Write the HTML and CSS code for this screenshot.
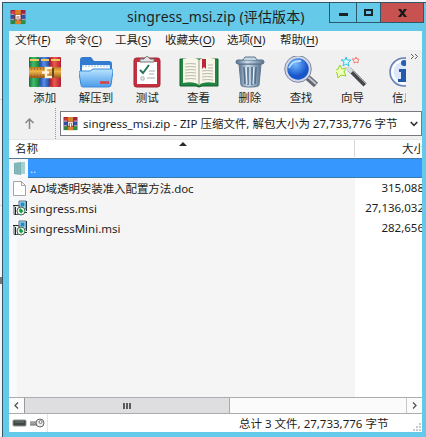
FILE: index.html
```html
<!DOCTYPE html>
<html lang="zh-CN">
<head>
<meta charset="utf-8">
<title>singress_msi.zip (评估版本)</title>
<link rel="stylesheet" href="styles.css">
</head>
<body>
<svg class="defs" width="0" height="0">
  <defs>
    <linearGradient id="gold" x1="0" y1="0" x2="0" y2="1"><stop offset="0" stop-color="#bd7520"/><stop offset=".4" stop-color="#efb64d"/><stop offset="1" stop-color="#9c5717"/></linearGradient>
    <linearGradient id="red"><stop offset="0" stop-color="#a51f24"/><stop offset=".4" stop-color="#ee5750"/><stop offset="1" stop-color="#ab2030"/></linearGradient>
    <linearGradient id="blue"><stop offset="0" stop-color="#2450a8"/><stop offset=".4" stop-color="#558ee9"/><stop offset="1" stop-color="#263f93"/></linearGradient>
    <linearGradient id="green"><stop offset="0" stop-color="#15723a"/><stop offset=".4" stop-color="#40bd69"/><stop offset="1" stop-color="#17753a"/></linearGradient>
    <linearGradient id="folder" x1="0" y1="0" x2="0" y2="1"><stop offset="0" stop-color="#b9e4ff"/><stop offset="1" stop-color="#4b9bea"/></linearGradient>
    <linearGradient id="bin"><stop offset="0" stop-color="#58718c"/><stop offset=".4" stop-color="#cddceb"/><stop offset="1" stop-color="#5b7690"/></linearGradient>
    <radialGradient id="lens" cx=".4" cy=".3"><stop offset="0" stop-color="#75b9ff"/><stop offset="1" stop-color="#1755cb"/></radialGradient>
    <symbol id="books" viewBox="0 0 32 32">
      <rect x="0" y="1" width="11" height="30" rx="1" fill="url(#green)"/><rect x="11" y="1" width="10" height="30" rx="1" fill="url(#blue)"/><rect x="21" y="1" width="11" height="30" rx="1" fill="url(#red)"/>
      <path d="M1 4h9M12 4h8M22 4h9" stroke="#f1ca60" stroke-width="2"/>
      <rect y="11" width="32" height="11" rx="1" fill="url(#gold)"/><path d="M2 13h14M2 20h14" stroke="#855019" stroke-dasharray="1 2"/>
      <path d="M23 12h-6v9h6M13 16.5h7" fill="none" stroke="#fff3dc" stroke-width="2.4"/><path d="M24 12v9" stroke="#6e4219" stroke-width="2"/>
    </symbol>
    <symbol id="rar" viewBox="0 0 16 16">
      <path fill="#9b2447" d="M0 0h16v5H0z"/><path fill="#304fa2" d="M0 5h16v5H0z"/><path fill="#328349" d="M0 10h16v5H0z"/>
      <path fill="#d13c35" d="M1 1h4v3H1z"/><path fill="#2e944d" d="M11 11h4v3h-4z"/>
      <path d="M5 0h6v15H5z" fill="#d9822a"/><path d="M4 5h8v6H4z" fill="#74332a"/><path d="M6 10V6h4v4M8 7v4" stroke="#fff" stroke-width="1.3" fill="none"/>
      <path d="M0 4.5h4M12 4.5h4M0 10h4M12 10h4" stroke="#e1a0a5"/>
    </symbol>
    <symbol id="msi" viewBox="0 0 15 16">
      <path d="M6 1h7v8H6z" fill="#b8dff1" stroke="#53778b"/><path d="M7.5 2.5h4v4h-4z" fill="#218bc4"/><path d="M13.5 1v10M11 12.5h3" stroke="#25363e"/>
      <path d="M1 5.5h5v9H1z" fill="#edf0ef" stroke="#535a5e"/><path d="M2.5 7v8M0 5.5h5" stroke="#222"/>
      <circle cx="8" cy="11" r="4" fill="#eef5ee" stroke="#49654f"/><path d="M7 8l3.5 3L8 13.5 6 11z" fill="#169b43"/>
    </symbol>
  </defs>
</svg>
<div class="desktop">
<main class="window">
  <header class="titlebar">
    <svg class="app-icon"><use href="#rar"/></svg>
    <h1>singress_msi.zip (评估版本)</h1>
    <div class="controls">
      <button class="ctl min" aria-label="最小化"><i></i></button>
      <button class="ctl max" aria-label="最大化"><i></i></button>
      <button class="ctl close" aria-label="关闭"><svg width="9" height="8" viewBox="0 0 9 8"><path d="M0 0h3l1.5 2.3L6 0h3L6 4l3 4H6L4.500 5.700 3 8H0l3-4z" fill="#15181c"/></svg></button>
    </div>
  </header>
  <div class="client">
    <nav class="menu"><span>文件(<u>F</u>)</span><span>命令(<u>C</u>)</span><span>工具(<u>S</u>)</span><span>收藏夹(<u>O</u>)</span><span>选项(<u>N</u>)</span><span>帮助(<u>H</u>)</span></nav>
    <div class="toolbar">
      <div class="tool"><svg viewBox="0 0 32 32"><use href="#books"/></svg><span>添加</span></div>
      <div class="tool"><svg class="wide" viewBox="0 0 34 32"><path d="M1 4q0-3 3-3h8l3 4h15q3 0 3 3v19H1z" fill="#327bd1"/><path d="M3 9h28v12H3z" fill="#f8fcff"/><path d="M3 10h28" stroke="#9abbe0" stroke-dasharray="2 1"/><path d="M1 15h10l3-2h19q1 0 1 2l-2 14q0 2-3 2H4q-2 0-2-2L0 17q0-2 1-2z" fill="url(#folder)" stroke="#3c8cdc"/><path d="M21 26.500h9" stroke="#d74042" stroke-width="2.500"/></svg><span>解压到</span></div>
      <div class="tool"><svg viewBox="0 0 32 32"><rect x="3" y="2" width="26" height="29" rx="2.500" fill="#c52f3e" stroke="#9e2533"/><path d="M6 6h20v22H6z" fill="#fff"/><path d="M9 6V3h4q3-5 6 0h4v3z" fill="#e1e3e6" stroke="#777"/><path d="M9 14l3 3 6-8" fill="none" stroke="#25765d" stroke-width="2"/><path d="M18 15h6M18 18h5M10 21h3v3h-3zM16 22h8" fill="none" stroke="#a7abb4"/></svg><span>测试</span></div>
      <div class="tool"><svg class="book" viewBox="0 0 40 32"><path d="M1 3h38v27H23l-3 1-3-1H1z" fill="#218542" stroke="#12612b"/><path d="M4 3q11-3 16 1 5-4 16-1v24q-11-2-16 2-5-4-16-2z" fill="#f8f5e9"/><path d="M20 4v25" stroke="#98968d"/><path d="M6 8q6-1 11 0M6 11q6-1 11 0M6 14q6-1 11 0M6 17q6-1 11 0M6 20q6-1 11 0M6 23q6-1 11 0M23 15q6-1 11 0M23 18q6-1 11 0M23 21q6-1 11 0M23 24q6-1 11 0M29 9h5M29 12h5" stroke="#bbb8ac" fill="none"/><path d="M23 3h4v10l-2-2-2 2z" fill="#bd2838"/></svg><span>查看</span></div>
      <div class="tool"><svg viewBox="0 0 32 32"><path d="M5 8h22l-2 21q0 2-9 2t-9-2z" fill="url(#bin)" stroke="#607890"/><path d="M10 11l1 17M14 11v18M18 11v18M22 11l-1 17" stroke="#52708e" stroke-width="1.600"/><path d="M12 11l1 17M20 11l-1 17" stroke="#edf5fb"/><rect x="2" y="4" width="28" height="4" rx="2" fill="url(#bin)" stroke="#546e88"/><path d="M9 4l2-3h10l2 3" fill="#c4d5e3" stroke="#60778f"/></svg><span>删除</span></div>
      <div class="tool"><svg class="wide" viewBox="0 0 34 32"><path d="M23 21l9 8" stroke="#60656f" stroke-width="6"/><path d="M23 20l9 8" stroke="#c0c5ce" stroke-width="2"/><circle cx="14" cy="13" r="12" fill="url(#lens)" stroke="#d3d8e6" stroke-width="2.500"/><circle cx="14" cy="13" r="13.300" fill="none" stroke="#7c87a4"/><path d="M5 12q3-8 12-7" fill="none" stroke="#b4dcff" stroke-width="2"/></svg><span>查找</span></div>
      <div class="tool"><svg viewBox="0 0 32 32"><path d="M13 13l16 16" stroke="#45474b" stroke-width="4.500"/><path d="M14 12l16 16" stroke="#a3a5aa"/><path d="M11 11l5 5" stroke="#d7dce1" stroke-width="4"/><path d="M10 1l1 3 4 0-3 3 1 3-3-2-3 2 1-4-3-2h4z" fill="#d5fcff" stroke="#38c5df"/><path d="M4 9l2 4 4-1-2 4 2 4-5-1-3 3-1-5-3-2 4-2z" fill="#edffba" stroke="#91d52b"/><path d="M20 1l1 2h2l-1 2 0 2-2-1-2 1v-2l-2-2h3z" fill="#fff0ec" stroke="#ee7d79"/></svg><span>向导</span></div>
      <div class="tool info"><svg viewBox="0 0 32 32"><circle cx="16" cy="16" r="14" fill="#dce7fb" stroke="#6680b5" stroke-width="1.500"/><circle cx="16" cy="16" r="11.500" fill="none" stroke="#fff" stroke-width="2"/><circle cx="16" cy="7" r="3" fill="#2560b8"/><path d="M11 13h8v10h3v3H10v-3h3v-7h-2z" fill="#2458ad"/></svg><span>信息</span></div>
      <div class="overflow"><svg width="9" height="7" viewBox="0 0 9 7"><path d="M1 1l2.500 2.500L1 6M5 1l2.500 2.500L5 6" fill="none" stroke="#5b5d63"/></svg></div>
    </div>
    <div class="location">
      <div class="up"><svg width="11" height="12" viewBox="0 0 11 12"><path d="M5.500 11V1M1.500 5l4-4 4 4" fill="none" stroke="#85878b" stroke-width="1.500"/></svg></div>
      <div class="address"><svg class="app-icon"><use href="#rar"/></svg><span>singress_msi.zip - ZIP 压缩文件, 解包大小为 27,733,776 字节</span><svg class="drop" width="8" height="6" viewBox="0 0 8 6"><path d="M.7 1L4 4.300 7.300 1" fill="none" stroke="#303236" stroke-width="1.600"/></svg></div>
    </div>
    <div class="columns"><span class="name-col">名称</span><i class="sort"></i><span class="size-col">大小</span></div>
    <div class="list">
      <div class="row selected"><div class="glyph"><svg width="13" height="15" viewBox="0 0 13 15"><path d="M1 2l7-1v13l-7-1z" fill="#78b1b3"/><path d="M8 1h4v12H8z" fill="#a5d0d0"/><path d="M3 3v9M6 2v11" stroke="#91c3c4"/></svg></div><span class="file">..</span></div>
      <div class="row"><div class="glyph"><svg width="13" height="15" viewBox="0 0 13 15"><path d="M.5.500h8l4 4v10H.5zM8.500.500v4h4" fill="#fff" stroke="#a5a5a5"/></svg></div><span class="file doc">AD域透明安装准入配置方法.doc</span><span class="size">315,088</span></div>
      <div class="row"><div class="glyph"><svg width="15" height="16"><use href="#msi"/></svg></div><span class="file">singress.msi</span><span class="size">27,136,032</span></div>
      <div class="row"><div class="glyph"><svg width="15" height="16"><use href="#msi"/></svg></div><span class="file">singressMini.msi</span><span class="size">282,656</span></div>
    </div>
    <div class="scroll"><div class="arrow"><svg width="5" height="7" viewBox="0 0 5 7"><path d="M4 .5L1 3.500 4 6.500" fill="none" stroke="#505257" stroke-width="1.300"/></svg></div><div class="thumb"><i></i><i></i><i></i></div><div class="arrow right"><svg width="5" height="7" viewBox="0 0 5 7"><path d="M1 .5l3 3-3 3" fill="none" stroke="#505257" stroke-width="1.300"/></svg></div></div>
    <footer class="status"><div class="lamps"><svg width="34" height="12" viewBox="0 0 34 12"><rect x="1" y="3" width="13" height="6" rx="1" fill="#3e4944" stroke="#929793"/><path d="M3 5h9" stroke="#707c75"/><path d="M18 5h8v2h-8M18 8h8" fill="#ddd" stroke="#62655f"/><circle cx="28" cy="6" r="4" fill="#eee" stroke="#666963"/><circle cx="28.500" cy="5" r="1.500" fill="#fff" stroke="#777"/></svg></div><div class="total"><span>总计 3 文件, 27,733,776 字节</span></div><svg class="grip" width="8" height="8" viewBox="0 0 8 8"><path d="M6 0h2v2H6zM3 3h2v2H3zM6 3h2v2H6zM0 6h2v2H0zM3 6h2v2H3zM6 6h2v2H6z" fill="#c7c9cd"/></svg></footer>
  </div>
</main>
</div>
</body>
</html>
```
FILE: styles.css
```css
* { box-sizing: border-box; }
body { margin: 0; width: 426px; height: 437px; overflow: hidden; background: #f7f8fa; color: #1d1e20; font: 12px/16px "Noto Sans", "Noto Sans CJK SC", sans-serif; }
.defs { position: absolute; width: 0; height: 0; }
svg { display: block; flex-shrink: 0; }
.desktop { height: 437px; padding: 2px 0 0 2px; background: linear-gradient(#d4d4d4, #d4d4d4) 0 99px / 2px 1px no-repeat, linear-gradient(#d4d4d4, #d4d4d4) 0 205px / 2px 1px no-repeat, linear-gradient(#777, #777) 0 277px / 2px 7px no-repeat, #f4f5f8; }
.window { height: 435px; border: solid #315665; border-width: 1px 0 0 1px; background: #65c9e9; padding: 0 4px 5px 6px; }
.titlebar { height: 28px; display: flex; align-items: center; }
.titlebar .app-icon { width: 16px; height: 15px; margin-left: 1px; }
.titlebar .app-icon, .address .app-icon { overflow: hidden; }
h1 { font-size: 14px; font-weight: 400; line-height: 20px; width: 182px; margin: 0 0 0 101px; white-space: nowrap; letter-spacing: .13px; }
.controls { display: flex; align-self: flex-start; margin-left: 21px; width: 95px; height: 20px; border: 1px solid #2b586b; border-top: 0; margin-right: -2px; }
.ctl { border: 0; border-right: 1px solid #2b586b; padding: 0; width: 27px; background: transparent; display: flex; align-items: center; justify-content: center; }
.min i { width: 9px; height: 3px; background: #16242a; margin-top: 3px; }
.max { width: 24px; }
.max i { width: 9px; height: 7px; border: 2px solid #16242a; }
.close { flex: 1; border: 0; background: #c85250; }
.client { height: 401px; background: #f0f0f1; overflow: hidden; }
.menu { height: 19px; background: #f7f7f8; display: flex; padding-left: 6px; white-space: nowrap; font-size: 11.5px; line-height: 18px; }
.menu span { width: 50px; letter-spacing: -.08px; }
.menu span:nth-child(4) { width: 62px; }
.menu span:nth-child(5) { width: 53px; }
.menu u { text-underline-offset: 2px; }
.toolbar { height: 58px; display: flex; padding-left: 10px; overflow: hidden; }
.tool { flex: 0 0 51.3px; width: 51.3px; display: flex; flex-direction: column; align-items: center; padding-top: 6px; }
.tool svg { width: 32px; height: 32px; }
.tool .wide { width: 34px; }
.tool .book { width: 40px; }
.tool span { margin-top: 1px; line-height: 17px; font-size: 11.5px; white-space: nowrap; }
.tool.info { flex-basis: 28px; width: 28px; align-items: flex-start; padding-left: 10px; overflow: hidden; }
.tool.info span { margin-left: 4px; }
.overflow { padding-top: 3px; margin-left: 4px; }
.location { height: 31px; display: flex; align-items: center; }
.up { width: 47px; height: 31px; padding: 10px 0 0 15px; border-right: 1px dotted #999; }
.address { width: 362px; height: 25px; margin: 0 0 0 4px; border: 1px solid #777a80; background: #fff; display: flex; align-items: center; padding-left: 2px; }
.address .app-icon { width: 15px; height: 14px; }
.address > span { width: 326px; margin: 1px 0 0 5px; white-space: nowrap; font-size: 11.5px; letter-spacing: -.01px; }
.drop { margin-left: 1px; }
.columns { height: 19px; background: #fff; display: flex; line-height: 19px; border-top: 1px solid #e6e6e9; }
.name-col { width: 170px; padding-left: 6px; font-size: 11.5px; line-height: 18px; }
.sort { width: 0; height: 0; border: solid transparent; border-width: 0 4px 4px; border-bottom-color: #272a2f; margin-top: 2px; }
.size-col { margin-left: 167px; width: 68px; height: 17px; border-left: 1px solid #d7d7db; padding-left: 47px; white-space: nowrap; overflow: hidden; font-size: 11.5px; line-height: 17px; }
.list { height: 239px; background: linear-gradient(90deg, #fafafd 0 8px, #f5f5f6 8px 346px, #fff 346px); border-top: 1px solid #4b799b; font-size: 11.5px; }
.row { height: 20px; display: flex; align-items: center; white-space: nowrap; }
.glyph { width: 19px; height: 19px; padding-left: 4px; display: flex; align-items: center; background: #f7f7fa; }
.file { flex: 1; padding-left: 2px; line-height: 19px; }
.doc { letter-spacing: -.08px; }
.selected { height: 19px; }
.selected .file { background: #3698ff; color: #dbf0ff; height: 19px; border-bottom: 1px solid #357baf; }
.size { width: 70px; margin-right: -2px; text-align: right; }
.scroll { height: 17px; border: solid #acacb0; border-width: 1px 0; display: flex; background: #fbfbfc; }
.arrow { width: 16px; display: flex; align-items: center; justify-content: center; border-right: 1px solid #999; }
.thumb { width: 205px; background: #dedee0; border-right: 1px solid #aaa; display: flex; justify-content: center; align-items: center; gap: 1px; }
.thumb i { width: 2px; height: 6px; background: #5a5b60; }
.arrow.right { margin-left: auto; border-right: 0; border-left: 1px solid #c8c8ca; }
.status { height: 18px; background: #fff; display: flex; }
.lamps { width: 39px; padding: 3px 0 0 3px; border-right: 1px solid #e4e4e6; }
.total { width: 363px; padding-left: 191px; white-space: nowrap; font-size: 11.5px; line-height: 19px; }
.grip { margin: 9px 0 0 2px; }
```
